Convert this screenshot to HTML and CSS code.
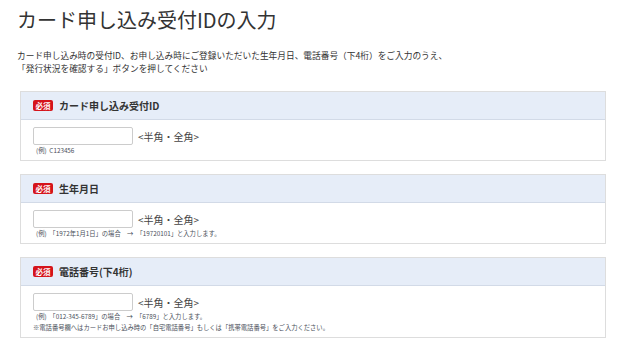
FILE: index.html
```html
<!DOCTYPE html>
<html lang="ja">

<head>
    <meta charset="utf-8" />
    <title>カード申し込み受付IDの入力</title>
    <link rel="stylesheet" href="styles.css">
</head>

<body>
    <div class="page">
        <h1 class="title">カード申し込み受付IDの入力</h1>
        <p class="lead">
            カード申し込み時の受付ID、お申し込み時にご登録いただいた生年月日、電話番号（下4桁）をご入力のうえ、<br />
            「発行状況を確認する」ボタンを押してください
        </p>

        <div class="field">
            <div class="field_head">
                <span class="req">必須</span>
                <span class="field_name">カード申し込み受付ID</span>
            </div>
            <div class="field_body">
                <div class="row">
                    <input class="txt" type="text" />
                    <span class="hint">&lt;半角・全角&gt;</span>
                </div>
                <p class="note">(例)&nbsp;&nbsp;C123456</p>
            </div>
        </div>

        <div class="field">
            <div class="field_head">
                <span class="req">必須</span>
                <span class="field_name">生年月日</span>
            </div>
            <div class="field_body">
                <div class="row">
                    <input class="txt" type="text" />
                    <span class="hint">&lt;半角・全角&gt;</span>
                </div>
                <p class="note">(例)&nbsp;&nbsp;「1972年1月1日」の場合　→　「19720101」と入力します。</p>
            </div>
        </div>

        <div class="field">
            <div class="field_head">
                <span class="req">必須</span>
                <span class="field_name">電話番号(下4桁)</span>
            </div>
            <div class="field_body">
                <div class="row">
                    <input class="txt" type="text" />
                    <span class="hint">&lt;半角・全角&gt;</span>
                </div>
                <p class="note">(例)&nbsp;&nbsp;「012-345-6789」の場合　→　「6789」と入力します。</p>
                <p class="note note_wide">※電話番号欄へはカードお申し込み時の「自宅電話番号」もしくは「携帯電話番号」をご入力ください。</p>
            </div>
        </div>
    </div>
</body>

</html>
```

FILE: styles.css
```css
* {
    margin: 0;
    padding: 0;
}

body {
    background: #fff;
    color: #333;
    font-family: "Noto Sans CJK JP", "Noto Sans", sans-serif;
}

.page {
    padding: 6px 14px 0 17px;
}

.title {
    font-size: 20px;
    line-height: 28px;
    font-weight: normal;
    color: #333;
}

.lead {
    margin-top: 15px;
    font-size: 8.7px;
    line-height: 13px;
    color: #333;
}

.field {
    border: 1px solid #dddddd;
    margin: 16px 0 0 3px;
}

.field + .field {
    margin-top: 13px;
}

.field_head {
    display: flex;
    align-items: center;
    gap: 6px;
    height: 27px;
    padding-left: 12px;
    background: #e6edf8;
    border-bottom: 1px solid #d2dae7;
}

.req {
    display: inline-block;
    width: 20px;
    height: 11px;
    line-height: 11px;
    text-align: center;
    background: #d5141b;
    border-radius: 2px;
    color: #fff;
    font-size: 7.5px;
    font-weight: bold;
}

.field_name {
    font-size: 10px;
    font-weight: bold;
    color: #333;
}

.field_body {
    padding: 7px 12px 4px;
}

.row {
    display: flex;
    align-items: center;
    gap: 5px;
}

.txt {
    width: 100px;
    height: 18px;
    box-sizing: border-box;
    border: 1px solid #cccccc;
    border-radius: 2px;
    background: #fff;
}

.hint {
    font-size: 10px;
    color: #444;
}

.note {
    font-size: 6.3px;
    line-height: 11px;
    padding-left: 3px;
    color: #4a4f5a;
}

.note_wide {
    padding-left: 0;
}
```
